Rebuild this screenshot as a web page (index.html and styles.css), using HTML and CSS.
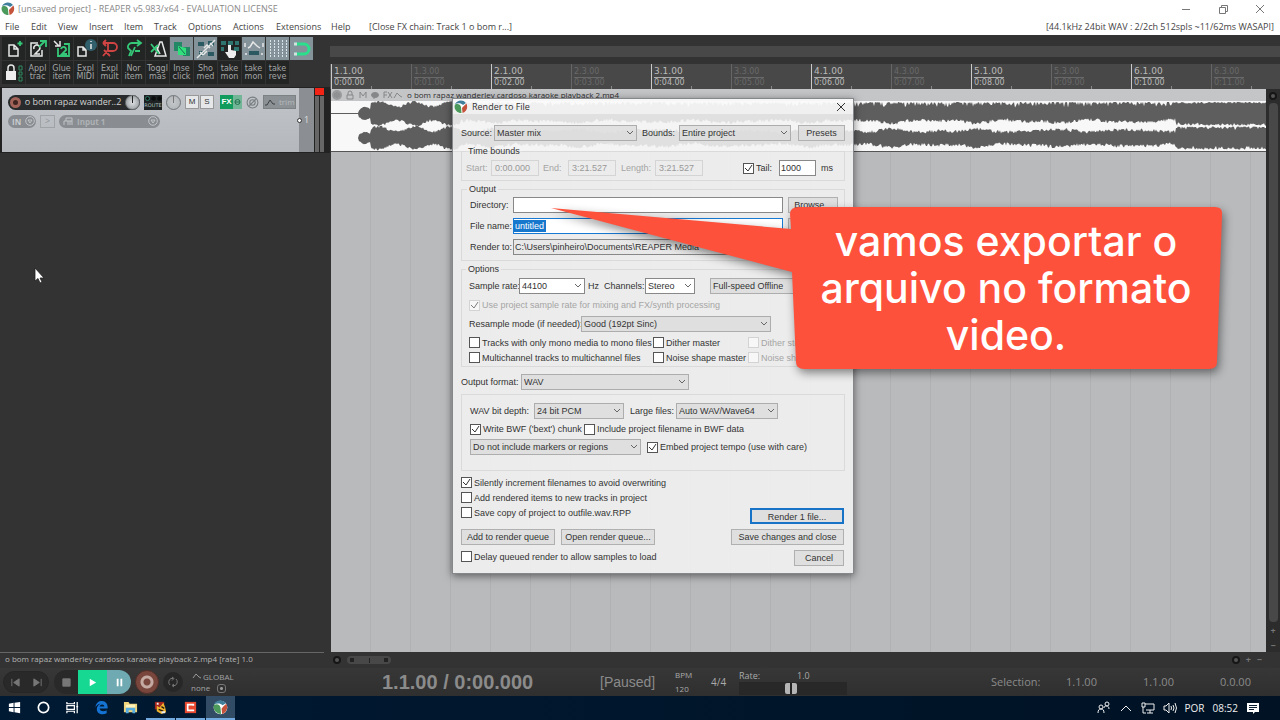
FILE: index.html
```html
<!DOCTYPE html>
<html lang="pt">
<head>
<meta charset="utf-8">
<title>REAPER - Render to File</title>
<link rel="stylesheet" href="styles.css">
</head>
<body>
<svg class="defs" aria-hidden="true">
  <symbol id="logo" viewBox="0 0 14 14">
    <circle cx="7" cy="7" r="6.4" fill="#fff"/>
    <path d="M1 4C3 0 9-1 12 3L9 5C7 3 4 3 1 4Z" fill="#3f7f9c"/>
    <path d="M1 4.500C4 3.500 6 4 7 7L7.500 13C2 13-.5 8 1 4.500Z" fill="#4b9a5c"/>
    <path d="M12.500 3.500C14.500 8 12 12 8.500 13L8 8C9 7 10.500 5 12.500 3.500Z" fill="#c5533c"/>
  </symbol>
</svg>

<header class="titlebar">
  <svg class="logo"><use href="#logo"/></svg>
  <span class="title">[unsaved project] - REAPER v5.983/x64 - EVALUATION LICENSE</span>
  <div class="winbtns">
    <button aria-label="Minimize"><svg viewBox="0 0 10 10"><path d="M1 5.500H9"/></svg></button>
    <button aria-label="Restore"><svg viewBox="0 0 10 10"><path d="M1.500 3.500H7.500V9.500H1.500ZM3.500 3V1.500H9.500V7.500H8"/></svg></button>
    <button aria-label="Close"><svg viewBox="0 0 10 10"><path d="M1 1L9 9M9 1L1 9"/></svg></button>
  </div>
</header>
<nav class="menubar">
  <div class="menus"><span>File</span><span>Edit</span><span>View</span><span>Insert</span><span>Item</span><span>Track</span><span>Options</span><span>Actions</span><span>Extensions</span><span>Help</span><span>[Close FX chain: Track 1 o bom r...]</span></div>
  <span>[44.1kHz 24bit WAV : 2/2ch 512spls ~11/62ms WASAPI]</span>
</nav>

<main class="workspace">
  <section class="left">
    <div class="toolbar">
      <button aria-label="New project"><svg viewBox="0 0 22 22"><path class="w" d="M6 7H11L15 11V18H6ZM11 7V11H15"/><path class="g" d="M17 3V8M14.500 5.500H19.500"/></svg></button>
      <button aria-label="Open project"><svg viewBox="0 0 22 22"><path class="w" d="M11 5H4V18H15V12"/><path class="w" d="M7 11A3 3 0 1 1 12 12L8 16H13"/><path class="g" d="M12 9L18 3M13 3H19V9"/></svg></button>
      <button aria-label="Save project"><svg viewBox="0 0 22 22"><path class="g" d="M7 10V18H18V6H13"/><path class="w" d="M3 3L8 8M9 3V8H4"/><path class="g" d="M10 11A2.500 2.500 0 1 1 15 12L11 16H16"/></svg></button>
      <button aria-label="Project settings"><svg viewBox="0 0 22 22"><path class="w" d="M3 9H8L11 12V18H3ZM8 9V12H11"/><circle cx="16" cy="7" r="6" fill="#315f6b"/><path class="w" d="M16 6V11M16 3V4"/></svg></button>
      <button aria-label="Undo"><svg viewBox="0 0 22 22"><path class="r" d="M4 5H14A4 4 0 0 1 14 13H9M9 5V12L4 18M5 12L11 18M4 5L7 2M4 5L7 8"/></svg></button>
      <button aria-label="Redo"><svg viewBox="0 0 22 22"><path class="g" d="M18 5H9A4 4 0 0 0 5 10L8 13L6 18M14 2L18 5L14 8M8 18L12 9M12 13H17"/></svg></button>
      <button aria-label="Metronome"><svg viewBox="0 0 22 22"><path class="w" d="M13 4L8 18H19L15 4ZM13 16L9 8"/><path class="g" d="M4 6L12 16M4 14L11 7"/></svg></button>
      <button class="on" aria-label="Crossfade"><svg viewBox="0 0 22 22"><path fill="#238765" d="M3 4H11V13H3ZM12 9H19V18H12Z"/><path fill="#2fe07c" d="M7 8L15 10V17H7Z"/><path stroke="#1d6e52" d="M8 9L14 16"/></svg></button>
      <button class="on" aria-label="Item grouping"><svg viewBox="0 0 22 22"><path fill="#2b5961" d="M3 4H9V8H3ZM13 3H19V8H13ZM4 13H9V18H4ZM13 14H19V18H13Z"/><path class="w" d="M2 20L20 2M5 14L8 17L12 13M9 10L12 7L15 10M15 5L18 8"/></svg></button>
      <button aria-label="Ripple editing"><svg viewBox="0 0 22 22"><path fill="#2f756f" d="M2 3H7V7H2ZM9 3H14V7H9ZM16 3H20V7H16ZM2 9H5V13H2ZM15 9H20V13H15Z"/><path fill="#eee" d="M9 7H12V12L17 13V17L15 20H10L6 14H9Z"/></svg></button>
      <button class="on" aria-label="Envelopes"><svg viewBox="0 0 22 22"><path class="w" d="M5 10L7 9L10 4L14 8L17 10M2 16H4M18 16H20"/><path fill="#2c5961" d="M6 13H16V17H6Z"/><path class="w" d="M2 5V9M20 5V9"/></svg></button>
      <button class="on" aria-label="Grid"><svg viewBox="0 0 22 22"><path class="grid" d="M3.500 2V20M7.500 2V20M11.500 2V20M15.500 2V20M19.500 2V20"/></svg></button>
      <button class="on" aria-label="Snap"><svg viewBox="0 0 22 22"><path class="snap" d="M3 6H13A5 5 0 0 1 13 16H3"/><path stroke="#d5dde0" stroke-width="3" d="M3 6H6M3 16H6"/></svg></button>
      <button aria-label="Lock"><svg viewBox="0 0 22 22"><path fill="#eee" d="M3 9H13V18H3Z"/><path class="w" d="M5 9V6A3 3 0 0 1 11 6V9"/><path class="lk" d="M16 4H19V8H16ZM16 10H19V13H16ZM16 15H19V19H16Z"/></svg></button>
      <button>Appl<br>trac</button><button>Glue<br>item</button><button>Expl<br>MIDI</button><button>Expl<br>mult</button><button>Nor<br>item</button><button>Toggl<br>mas</button><button>Inse<br>click</button><button>Sho<br>med</button><button>take<br>mon</button><button>take<br>mon</button><button>take<br>reve</button>
    </div>

    <div class="trackrow">
      <div class="track">
        <div class="tline">
          <div class="tname"><i class="arm"></i><span>o bom rapaz wander..2</span><i class="knob"></i></div>
          <button class="route"><i></i><b></b><b></b><span>ROUTE</span></button>
          <i class="knob pale"></i>
          <div class="ms"><button>M</button><button>S</button></div>
          <button class="fx"><b>FX</b><svg viewBox="0 0 9 12"><circle cx="4.500" cy="6" r="2.500"/><path d="M2 6H7"/></svg></button>
          <svg class="phase" viewBox="0 0 12 12"><circle cx="6" cy="6" r="5"/><circle cx="6" cy="6" r="2.500"/><path d="M3 9L9 3"/></svg>
          <button class="trim"><svg viewBox="0 0 12 10"><path d="M1 8H3L6 3L9 7H11"/></svg><span>trim</span></button>
        </div>
        <div class="tline second">
          <button class="in">IN <svg viewBox="0 0 10 10"><circle cx="5" cy="5" r="4.300"/><path d="M3 4H7L5 7Z"/></svg></button>
          <button class="arrow">&gt;</button>
          <button class="input"><svg viewBox="0 0 10 10"><path d="M1 9V5H3V2H9V9M3 5H9M5 5V9M7 5V9"/></svg><span>Input 1</span><svg viewBox="0 0 10 10"><circle cx="5" cy="5" r="4.300"/><path d="M3 4H7L5 7Z"/></svg></button>
        </div>
      </div>
      <div class="tnum"><i></i>1</div>
      <div class="meter"><i></i><i></i></div>
    </div>
    <div class="status">o bom rapaz wanderley cardoso karaoke playback 2.mp4 [rate] 1.0</div>
  </section>

  <section class="right">
    <div class="overview"></div>
    <div class="ruler" id="ruler"></div>
    <div class="arrange">
      <div class="canvas">
        <div class="item">
          <div class="itemhead">
            <svg viewBox="0 0 72 12"><circle cx="6" cy="6" r="5" fill="#989a9c" stroke="none"/><path d="M4 4V8M6 3V9M8 4V8"/><path d="M16 6H22V10H16ZM17 6V4A2 2 0 0 1 21 4V6"/><path d="M29 9V3L32 7L35 3V9"/><ellipse cx="44" cy="6" rx="3.500" ry="2.500" fill="#858789"/><path d="M43 8V10M53 9V3H56M53 6H56M57 3L61 9M61 3L57 9M63 9L66 4L69 7L71 8"/></svg>
            <span>o bom rapaz wanderley cardoso karaoke playback 2.mp4</span>
          </div>
          <svg class="wave" id="wave" viewBox="0 0 935 50" preserveAspectRatio="none"></svg>
        </div>
      </div>
      <div class="vscroll"><i class="dot"></i><div class="thumb"></div><span>+</span><span>−</span></div>
    </div>
    <div class="hscroll"><i class="dot"></i><div class="hthumb"><i></i><b></b><i></i></div><span class="grow"></span><i class="dot"></i><span>+</span><span>−</span></div>
  </section>
</main>

<footer class="transport">
  <div class="pill"><button aria-label="Go to start"><svg viewBox="0 0 12 12"><path d="M2 2V10M10 2V10L4 6Z"/></svg></button><button aria-label="Go to end"><svg viewBox="0 0 12 12"><path d="M10 2V10M2 2V10L8 6Z"/></svg></button></div>
  <div class="pill main"><button aria-label="Stop"><svg viewBox="0 0 12 12"><path d="M2 2H10V10H2Z"/></svg></button><button class="play" aria-label="Play"><svg viewBox="0 0 12 12"><path d="M3 2L10 6L3 10Z"/></svg></button><button class="pause" aria-label="Pause"><svg viewBox="0 0 12 12"><path d="M3 2H5V10H3ZM7 2H9V10H7Z"/></svg></button></div>
  <button class="rec" aria-label="Record"></button>
  <button class="loop" aria-label="Repeat"><svg viewBox="0 0 12 12"><path d="M3 9A4 4 0 0 1 4 2.500H6M9 3A4 4 0 0 1 8 9.500H6M5 1L7 2.500L5 4.500M7 8L5 9.500L7 11"/></svg></button>
  <div class="global"><span><svg viewBox="0 0 10 8"><path d="M1 6L4 2L7 5L9 6"/></svg>GLOBAL</span><span>none <i></i></span></div>
  <div class="time">1.1.00 / 0:00.000</div>
  <div class="paused">[Paused]</div>
  <div class="bpm"><span>BPM</span><span>120</span></div>
  <div class="sig">4/4</div>
  <div class="rate"><span>Rate:</span><span>1.0</span><input type="range" aria-label="Rate" value="48"></div>
  <div class="sel"><span>Selection:</span><span>1.1.00</span><span>1.1.00</span><span>0.0.00</span></div>
</footer>

<footer class="taskbar">
  <button aria-label="Start"><svg viewBox="0 0 16 16"><path fill="#fff" d="M2 4L7 3V7.500H2ZM8 3L14 2V7.500H8ZM2 8.500H7V13L2 12ZM8 8.500H14V14L8 13Z"/></svg></button>
  <button aria-label="Cortana"><svg viewBox="0 0 16 16"><circle cx="8" cy="8" r="5.500" fill="none" stroke="#fff" stroke-width="1.800"/></svg></button>
  <button aria-label="Task view"><svg viewBox="0 0 16 16"><path fill="none" stroke="#fff" stroke-width="1.300" d="M2 2V4H10V2M2 14V12H10V14M2 6H10V10H2ZM13 2V14M12 7H14"/></svg></button>
  <button aria-label="Edge"><svg viewBox="0 0 16 16"><path fill="#1573d4" d="M1.500 8C2 3 5 1 8.500 1C13 1 15 5 14.500 9H6C6.500 12.500 11 12.500 13.500 11V14C9 16.500 3 15 3 9.500C3 7 5 5 7 4C4.500 4 2.500 6 1.500 8ZM6 7H11C11 4 6.500 4 6 7Z"/></svg></button>
  <button aria-label="Explorer"><svg viewBox="0 0 16 16"><path fill="#f0d47c" d="M1 2H6L7 4H15V13H1Z"/><path fill="#58aee0" d="M3 8H13V14H10V11H6V14H3Z"/><path fill="#fff3bd" d="M3 5H13V8H3Z"/></svg></button>
  <button class="open" aria-label="Player"><svg viewBox="0 0 16 16"><path fill="#a32620" d="M2 2H12V10H2Z"/><path fill="#f0b52e" d="M4 6L7 8L11 3L13 8L14 13L9 15L4 12Z"/><path stroke="#2a1a12" stroke-width="1.500" d="M6 10L11 12M9 7L12 9"/><path fill="#eee" d="M4 3H6V5H4ZM9 12H13V14H9Z"/></svg></button>
  <button class="open" aria-label="Camtasia"><svg viewBox="0 0 16 16"><path fill="#e8482f" d="M2 2H14V14H2Z"/><path fill="none" stroke="#fff" stroke-width="1.800" d="M11 6V5H5V11H11V10"/></svg></button>
  <button class="open active" aria-label="REAPER"><svg viewBox="0 0 14 14"><use href="#logo"/></svg></button>
  <div class="tray">
    <svg viewBox="0 0 14 14"><path d="M1 12C1 9 2 8 4 8C6 8 7 9 7 12M7 7C7 5 8 5 9.500 5C11 5 12 6 12 8"/><circle cx="4" cy="6" r="2"/><circle cx="10" cy="3" r="2"/></svg>
    <svg viewBox="0 0 14 14"><path d="M2 10L7 5L12 10"/></svg>
    <svg viewBox="0 0 14 14"><path d="M4 3H13V9H5M9 9V12M6 12H12M1 2H4V6H1ZM2 6V12H5"/></svg>
    <svg viewBox="0 0 14 14"><path d="M1 5H3L6 2V12L3 9H1ZM8 5Q9 7 8 9M10 4Q12 7 10 10M12 2Q15 7 12 12"/></svg>
    <span>POR</span><span>08:52</span>
    <svg viewBox="0 0 14 14"><path fill="#fff" stroke="none" d="M1 2H13V11H9L7 13V11H1Z"/><path stroke="#0a1d31" d="M3 4.500H11M3 6.500H11M3 8.500H8"/></svg>
  </div>
</footer>

<form class="dialog" onsubmit="return false">
  <div class="dtitle"><svg class="logo"><use href="#logo"/></svg><span>Render to File</span><button aria-label="Close dialog"><svg viewBox="0 0 10 10"><path d="M1 1L9 9M9 1L1 9"/></svg></button></div>
  <div class="dbody">
    <div class="row source">
      <label class="l-src" for="src">Source:</label><select id="src" class="w143"><option>Master mix</option></select>
      <label class="l-bnd" for="bnd">Bounds:</label><select id="bnd" class="w112"><option>Entire project</option></select>
      <button class="presets">Presets</button>
    </div>
    <fieldset class="tb">
      <legend>Time bounds</legend>
      <div class="row">
        <label class="dis l-start" for="st">Start:</label><input class="ro" id="st" disabled value="0:00.000">
        <label class="dis l-end" for="en">End:</label><input class="ro" id="en" disabled value="3:21.527">
        <label class="dis l-len" for="ln">Length:</label><input class="ro" id="ln" disabled value="3:21.527">
        <label class="ck tail"><input type="checkbox" checked>Tail:</label><input class="w37" aria-label="Tail length" value="1000"><span class="ms-unit">ms</span>
      </div>
    </fieldset>
    <fieldset class="out">
      <legend>Output</legend>
      <div class="row"><label class="l-out" for="dir">Directory:</label><input id="dir" class="grow"><button class="w50">Browse...</button></div>
      <div class="row"><label class="l-out" for="fn">File name:</label><div class="fname grow"><input id="fn" value="untitled"></div><button class="w50" aria-label="Wildcards"></button></div>
      <div class="row"><label class="l-out" for="rt">Render to:</label><input id="rt" class="grow path" readonly value="C:\Users\pinheiro\Documents\REAPER Media"><button class="w50" aria-label="File list"></button></div>
    </fieldset>
    <fieldset class="opt">
      <legend>Options</legend>
      <div class="row"><label class="l-sr" for="sr">Sample rate:</label><select id="sr" class="white w66"><option>44100</option></select><span class="hz">Hz</span><label class="l-ch" for="ch">Channels:</label><select id="ch" class="white w50"><option>Stereo</option></select><select class="speed" aria-label="Render speed"><option>Full-speed Offline</option></select></div>
      <div class="row"><label class="ck dis"><input type="checkbox" checked disabled>Use project sample rate for mixing and FX/synth processing</label></div>
      <div class="row"><label class="l-rm" for="rm">Resample mode (if needed):</label><select id="rm" class="w190"><option>Good (192pt Sinc)</option></select></div>
      <div class="checks">
        <label class="ck"><input type="checkbox">Tracks with only mono media to mono files</label><label class="ck"><input type="checkbox">Dither master</label><label class="ck dis"><input type="checkbox" disabled>Dither stems</label>
        <label class="ck"><input type="checkbox">Multichannel tracks to multichannel files</label><label class="ck"><input type="checkbox">Noise shape master</label><label class="ck dis"><input type="checkbox" disabled>Noise shape stems</label>
      </div>
    </fieldset>
    <div class="row format"><label class="l-of" for="of">Output format:</label><select id="of" class="w168"><option>WAV</option></select></div>
    <div class="box">
      <div class="row"><label class="l-bd" for="bd">WAV bit depth:</label><select id="bd" class="w90"><option>24 bit PCM</option></select><label class="l-lf" for="lf">Large files:</label><select id="lf" class="w102"><option>Auto WAV/Wave64</option></select></div>
      <div class="row"><label class="ck c1"><input type="checkbox" checked>Write BWF ('bext') chunk</label><label class="ck"><input type="checkbox">Include project filename in BWF data</label></div>
      <div class="row"><select class="w171" aria-label="Markers"><option>Do not include markers or regions</option></select><label class="ck emb"><input type="checkbox" checked>Embed project tempo (use with care)</label></div>
    </div>
    <div class="foot">
      <div class="fl">
        <label class="ck"><input type="checkbox" checked>Silently increment filenames to avoid overwriting</label>
        <label class="ck"><input type="checkbox">Add rendered items to new tracks in project</label>
        <label class="ck"><input type="checkbox">Save copy of project to outfile.wav.RPP</label>
        <div class="row qb"><button>Add to render queue</button><button>Open render queue...</button></div>
        <label class="ck"><input type="checkbox">Delay queued render to allow samples to load</label>
      </div>
      <div class="fr"><button class="primary">Render 1 file...</button><button class="save">Save changes and close</button><button class="cancel">Cancel</button></div>
    </div>
  </div>
</form>

<aside class="callout">
  <svg viewBox="0 0 680 172"><path d="M249 2H665Q673 2 672 10L667 157Q667 164 659 164H254Q246 164 246 157L242 67L1 3L241 24L240 9Q240 2 249 2Z"/></svg>
  <p>vamos exportar o<br>arquivo no formato<br>video.</p>
</aside>
<svg class="cursor" viewBox="0 0 12 18"><path d="M1 1V14L4 11.500L6 16L8 15L6 11H10Z" fill="#fff" stroke="#222" stroke-width=".8"/></svg>
<script src="script.js"></script>
</body>
</html>
```
FILE: styles.css
```css
* { box-sizing: border-box; }
body { margin: 0; height: 100vh; overflow: hidden; display: flex; flex-direction: column; background: #333; color: #aaa; font: 9px/12px "Open Sans", "Noto Sans", sans-serif; position: relative; }
button { font: inherit; color: inherit; padding: 0; border: 0; background: none; }
i { font-style: normal; flex: none; }
svg { flex: none; fill: none; }
.defs { position: absolute; width: 0; height: 0; }
.grow { flex: 1; min-width: 0; }
.logo { width: 14px; height: 14px; }

.titlebar { height: 18px; flex: none; display: flex; align-items: center; gap: 3px; padding: 0 15px 0 1px; background: #fff; color: #888; }
.title { flex: 1; }
.winbtns { display: flex; gap: 27px; }
.winbtns button { width: 10px; height: 10px; display: flex; }
.winbtns svg { width: 10px; height: 10px; stroke: #777; }
.menubar { height: 17px; flex: none; display: flex; justify-content: space-between; align-items: center; padding: 0 6px 0 5px; background: #fff; color: #444; white-space: nowrap; }
.menus { display: grid; grid-template-columns: 26px 27px 31px 35px 30px 34px 45px 43px 55px 38px auto; }

.workspace { flex: 1; min-height: 0; display: flex; }
.left { width: 330px; flex: none; display: flex; flex-direction: column; }
.toolbar { display: grid; grid-template-columns: repeat(13, 23px); grid-auto-rows: 23px; gap: 1px; padding: 2px 2px 3px; }
.toolbar button { background: #232424; color: #a4a6a6; font: 8px/8px "DejaVu Sans", sans-serif; display: flex; align-items: center; justify-content: center; overflow: hidden; }
.toolbar button.on { background: #84929a; }
.toolbar svg { width: 22px; height: 22px; }
.toolbar .w { stroke: #e6e8e8; stroke-width: 1.5; }
.toolbar .g { stroke: #35c878; stroke-width: 1.8; }
.toolbar .r { stroke: #d14444; stroke-width: 1.8; }
.toolbar .lk { stroke: #2f8a60; stroke-width: 1; }
.toolbar .grid { stroke: #dbe4e8; stroke-dasharray: 2 1; }
.toolbar .snap { stroke: #2ae08c; stroke-width: 3; }

.trackrow { height: 66px; flex: none; display: flex; padding: 1px 6px 1px 2px; background: #222; }
.track { flex: 1; background: linear-gradient(#c2c6cb, #b4b8bd); padding: 6px 0 0 6px; }
.tline { display: flex; align-items: center; height: 16px; gap: 4px; }
.tname { width: 132px; height: 15px; border-radius: 8px; background: #292a2b; color: #d2d2d2; display: flex; align-items: center; justify-content: space-between; padding-left: 2px; white-space: nowrap; font: 9px/14px "Open Sans", sans-serif; }
.arm { width: 11px; height: 11px; border-radius: 50%; border: 3px solid #a26358; background: #402420; }
.knob { width: 15px; height: 15px; border-radius: 50%; background: linear-gradient(90deg, transparent 6px, #222 6px, #222 7px, transparent 7px) 0 0/13px 7px no-repeat, radial-gradient(#dfe1e3, #8c9093); border: 1px solid #70767a; }
.knob.pale { background: linear-gradient(90deg, transparent 6px, #777 6px, #777 7px, transparent 7px) 0 0/13px 7px no-repeat, radial-gradient(#c5c8cb, #aeb2b5); }
.route { width: 18px; height: 15px; background: #1e2223; color: #a9c0bd; display: flex; flex-wrap: wrap; justify-content: center; gap: 0 1px; padding-top: 1px; font: 5px/6px "DejaVu Sans", sans-serif; }
.route i, .route b { width: 5px; height: 5px; border-radius: 50%; background: #0b0d0d; border: 1px solid #101414; }
.route i { border-color: #2a7764; }
.ms { display: flex; gap: 1px; margin: 0 2px 0 0; }
.ms button { width: 14px; height: 14px; background: #e5e7e9; color: #333; border: 1px solid #999; font: 8px/12px "Liberation Sans", sans-serif; }
.fx { width: 22px; height: 14px; display: flex; background: #72b597; color: #fff; font: 8px/14px "Liberation Sans", sans-serif; }
.fx b { width: 13px; background: #119b5c; }
.fx svg { width: 9px; height: 14px; stroke: #25734f; }
.phase { width: 13px; height: 13px; stroke: #777d80; }
.trim { width: 33px; height: 14px; display: flex; align-items: center; gap: 3px; background: #8c9195; color: #b7bbbe; font-size: 8px; border: 1px solid #7c8184; }
.trim svg { width: 12px; height: 10px; stroke: #3a4043; }
.tline.second { margin-top: 3px; color: #c7cbce; }
.in, .input { height: 13px; border-radius: 7px; background: #898d91; display: flex; align-items: center; gap: 4px; padding: 0 2px 0 4px; font: bold 8px/13px "Open Sans", sans-serif; }
.in { width: 28px; }
.in svg, .input svg { width: 10px; height: 10px; stroke: #c1c5c8; }
.arrow { width: 15px; height: 13px; border: 1px solid #9fa3a6; color: #8e9295; line-height: 10px; }
.input { width: 101px; }
.input span { flex: 1; text-align: left; color: #aeb2b5; }
.tnum { width: 15px; background: #8b8f93; color: #ddd; display: flex; align-items: center; gap: 2px; }
.tnum i { width: 5px; height: 5px; margin-left: -2px; border-radius: 50%; background: #fff; border: 1px solid #333; }
.meter { width: 9px; display: grid; grid-template-columns: 4px 4px; gap: 1px; background: linear-gradient(#f32416 7px, transparent 7px); margin-left: 1px; }
.meter i { background: linear-gradient(transparent 8px, #666 8px); }
.status { margin-top: auto; margin-right: 6px; height: 16px; border-top: 1px solid #666; padding: 0 5px; color: #b5b5b5; font-size: 8px; }

.right { flex: 1; min-width: 0; display: flex; flex-direction: column; }
.overview { height: 29px; flex: none; border: solid #333; border-width: 11px 0 7px; background: #484848; }
.ruler { height: 25px; flex: none; display: flex; overflow: hidden; background: #484848; border-left: 1px solid #555; }
.mark { width: 80px; flex: none; border-left: 1px solid #c9c9c9; padding: 2px 0 0 2px; color: #b9b9b9; font: 9px/11px "DejaVu Sans", sans-serif; background: linear-gradient(#888, #888) 39px 22px/1px 3px no-repeat; }
.mark span { display: block; width: 30px; white-space: nowrap; }
.mark span + span { border-top: 1px solid #aaa; font-size: 8px; line-height: 10px; }
.mark.minor { color: #686868; border-left-color: #666; font-size: 8px; }
.mark.minor span + span { border-color: #686868; }
.arrange { flex: 1; min-height: 0; display: flex; border-left: 1px solid #333; }
.canvas { flex: 1; min-width: 0; background: repeating-linear-gradient(90deg, transparent 0 39px, #afb1b3 39px 40px), #b9babc; }
.item { border-bottom: 1px solid #555; }
.itemhead { height: 12px; background: #c4c5c7; color: #2f2f2f; display: flex; align-items: center; gap: 4px; font-size: 8px; white-space: nowrap; }
.itemhead svg { width: 72px; height: 12px; stroke: #858789; }
.wave { display: block; width: 100%; height: 50px; background: #f8f8f8; }
.vscroll { width: 14px; background: #2c2c2c; display: flex; flex-direction: column; align-items: center; gap: 3px; padding-top: 3px; color: #777; font-weight: bold; }
.dot { width: 8px; height: 8px; border-radius: 50%; border: 2px solid #161616; background: #555; }
.thumb { flex: 1; width: 9px; border-radius: 4px; background: #484848; }
.hscroll { height: 16px; flex: none; display: flex; align-items: center; gap: 6px; padding: 0 18px 0 3px; color: #777; font-weight: bold; }
.hthumb { width: 44px; height: 8px; border-radius: 4px; background: #484848; display: flex; align-items: center; justify-content: space-between; padding: 0 3px; }
.hthumb i { width: 4px; height: 4px; background: #222; }
.hthumb b { width: 1px; height: 5px; background: #222; }

.transport { height: 28px; flex: none; display: flex; align-items: center; padding: 0 28px 0 3px; background: linear-gradient(#373737, #2f2f2f); white-space: nowrap; }
.pill { height: 22px; flex: none; display: flex; border-radius: 11px; background: #292929; overflow: hidden; border: 1px solid #262626; }
.pill button { width: 22px; display: flex; align-items: center; justify-content: center; }
.pill svg { width: 11px; height: 11px; fill: #777; stroke: #777; }
.pill.main { margin-left: 5px; height: 24px; border: 0; border-radius: 12px; }
.pill.main button { width: 24px; }
.pill.main .play { width: 29px; background: #16d892; }
.pill.main .pause { background: #6fa9b1; }
.pill .play svg, .pill .pause svg { fill: #fff; stroke: none; }
.rec { width: 24px; height: 24px; margin-left: 4px; border-radius: 50%; background: radial-gradient(transparent 3px, #c4aaa2 4px, #c4aaa2 6px, transparent 7px), #78463c; border: 1px solid #502e28; flex: none; }
.loop { width: 20px; height: 20px; margin: 0 8px 0 4px; border-radius: 50%; background: #272727; padding: 4px; display: flex; flex: none; }
.loop svg { width: 12px; height: 12px; stroke: #777; }
.global { width: 191px; display: flex; flex-direction: column; color: #a2a2a2; font-size: 8px; line-height: 11px; }
.global svg { width: 12px; height: 8px; stroke: #999; }
.global i { display: inline-block; width: 9px; height: 9px; border: 1px solid #777; border-radius: 3px; margin-left: 5px; vertical-align: middle; background: radial-gradient(#999 1px, transparent 2px); }
.time { width: 218px; color: #8b8b8b; font: bold 20px/24px "Liberation Sans", sans-serif; }
.paused { width: 75px; color: #8b8b8b; font: 14px/20px "Liberation Sans", sans-serif; }
.bpm { width: 36px; display: flex; flex-direction: column; gap: 2px; font-size: 8px; }
.sig { width: 28px; font-size: 10px; }
.rate { width: 112px; display: grid; grid-template-columns: 1fr 54px; line-height: 12px; }
.rate input { grid-column: 1 / 3; appearance: none; margin: 0; width: 108px; height: 13px; background: #282828; }
.rate input::-webkit-slider-thumb { appearance: none; width: 12px; height: 11px; border-radius: 2px; background: linear-gradient(90deg, #b5b5b5 5px, #222 5px, #222 7px, #b5b5b5 7px); }
.sel { margin-left: auto; display: grid; grid-template-columns: 75px 77px 77px 32px; font-size: 11px; color: #8b8b8b; }

.taskbar { height: 24px; flex: none; display: flex; background: linear-gradient(90deg, #001a33, #001224); color: #eee; }
.taskbar button { width: 29px; display: flex; align-items: center; justify-content: center; border-bottom: 2px solid transparent; }
.taskbar button svg { width: 15px; height: 15px; }
.taskbar .open { border-color: #72a9df; margin-left: 1px; }
.taskbar .active { background: #334c66; }
.tray { margin-left: auto; display: flex; align-items: center; gap: 8px; padding-right: 20px; font-size: 10px; }
.tray svg { width: 14px; height: 14px; stroke: #eee; }

.dialog { position: absolute; left: 452px; top: 98px; width: 402px; margin: 0; border: 1px solid #85888a; background: rgba(242, 242, 242, .88); box-shadow: 0 2px 8px rgba(0, 0, 0, .5); color: #333; font: 9px/14px "Liberation Sans", Arial, sans-serif; white-space: nowrap; }
.dtitle { height: 15px; display: flex; align-items: center; gap: 4px; padding: 0 7px 0 1px; background: rgba(255, 255, 255, .5); font: 9px/14px "Open Sans", sans-serif; }
.dtitle span { flex: 1; }
.dtitle button { width: 10px; height: 10px; display: flex; }
.dtitle button svg { width: 10px; height: 10px; stroke: #333; }
.dbody { padding: 0 8px 7px; }
.row { display: flex; align-items: center; height: 16px; }
.row > * { flex: none; }
.row > .grow { flex: 1; }
.source { margin: 11px 0 2px; }
.dialog select, .dialog button, .dialog input { font: inherit; }
.dialog select { appearance: none; height: 16px; margin: 0; padding: 0 12px 0 2px; border: 1px solid #adadad; border-radius: 0; color: #333; background: url("data:image/svg+xml,%3Csvg xmlns='http://www.w3.org/2000/svg' width='8' height='6'%3E%3Cpath d='M1 1L4 4L7 1' fill='none' stroke='%23666'/%3E%3C/svg%3E") right 2px center no-repeat rgba(220, 220, 220, .8); }
.dialog select.white { background-color: #fff; border-color: #888; }
.dialog .row > button, .fr button { height: 16px; border: 1px solid #b0b0b0; background: rgba(222, 222, 222, .9); }
.dialog input:not([type]) { height: 16px; margin: 0; padding: 0 1px; border: 1px solid #888; border-radius: 0; background: #fff; color: #333; min-width: 0; }
.dialog input.ro:not([type]) { width: 48px; padding: 0 3px; border-color: #d4d4d4; background: transparent; color: #999; }
.dialog .dis { color: #a5a5a5; }
fieldset { margin: 0; padding: 0 5px; border: 1px solid #dadada; min-width: 0; }
legend { height: 16px; line-height: 16px; padding: 0 2px; }
.l-src { width: 33px; }
.l-bnd { width: 42px; padding-left: 5px; }
.w143 { width: 143px; }
.w112 { width: 112px; }
.presets { width: 47px; margin-left: auto; }
.tb { padding: 1px 5px 4px 4px; }
.l-start { width: 25px; }
.l-end { width: 29px; padding-left: 4px; }
.l-len { width: 39px; padding-left: 5px; }
.tail { width: 36px; margin-left: auto; }
.w37 { width: 37px; }
.ms-unit { width: 23px; padding-left: 5px; }
.out { padding-bottom: 5px; }
.out .row + .row { margin-top: 5px; }
.out .row { padding-left: 3px; padding-right: 1px; }
.l-out { width: 43px; }
.w50 { width: 50px; }
.out .w50 { margin-left: 5px; }
.fname { height: 16px; border: 1px solid #1779d3; background: #fff; display: flex; align-items: center; }
.fname input:not([type]) { width: 32px; height: 12px; border: 0; background: #1677cc; color: #fff; line-height: 12px; }
.dialog input.path:not([type]) { background: #e8e8e8; }
.opt { padding: 1px 5px 1px 4px; }
.opt .row { margin-bottom: 3px; padding-left: 3px; }
.l-sr { width: 50px; }
.w66 { width: 66px; }
.hz { width: 19px; padding-left: 3px; }
.l-ch { width: 41px; }
.dialog .speed { width: 120px; margin-left: 15px; }
.l-rm { width: 112px; }
.w190 { width: 190px; }
.ck { display: flex; align-items: center; height: 15px; gap: 2px; }
.ck input { appearance: none; width: 11px; height: 11px; margin: 0; border: 1px solid #555; background: #fff; flex: none; }
.ck input:checked { background: url("data:image/svg+xml,%3Csvg xmlns='http://www.w3.org/2000/svg' width='9' height='9'%3E%3Cpath d='M1 4L4 7L8 1' fill='none' stroke='%23333'/%3E%3C/svg%3E") center no-repeat #fff; }
.ck input:disabled { border-color: #c4c4c4; opacity: .6; }
.checks { display: grid; grid-template-columns: 184px 95px auto; padding-left: 3px; }
.format { margin: 7px 0 4px; }
.l-of { width: 60px; }
.w168 { width: 168px; }
.box { border: 1px solid #dadada; padding: 8px 8px 15px; display: grid; gap: 2px; }
.l-bd { width: 64px; }
.w90 { width: 90px; }
.l-lf { width: 52px; padding-left: 6px; }
.w102 { width: 102px; }
.c1 { width: 114px; }
.w171 { width: 171px; }
.emb { margin-left: 6px; }
.foot { display: flex; justify-content: space-between; margin-top: 4px; }
.qb { margin: 9px 0 4px; gap: 6px; }
.qb button { width: 94px; }
.fr { display: flex; flex-direction: column; align-items: flex-end; gap: 5px; padding: 33px 1px 0 0; }
.fr .primary { width: 94px; border: 2px solid #1673c7; }
.save { width: 113px; }
.cancel { width: 50px; }

.callout { position: absolute; left: 550px; top: 205px; width: 680px; height: 172px; }
.callout svg { position: absolute; inset: 0; width: 680px; height: 172px; filter: drop-shadow(2px 4px 5px rgba(0, 0, 0, .45)); }
.callout path { fill: #fe513c; }
.callout p { position: relative; margin: 0; padding: 13px 12px 0 244px; text-align: center; color: #fff; font: 500 41px/47px Inter, "Open Sans", sans-serif; white-space: nowrap; }
.cursor { position: absolute; left: 34px; top: 267px; width: 12px; height: 18px; }
```
FILE: script.js
```js
// Ruler: one cell per half measure, majors on every second cell.
const ruler = document.getElementById("ruler");
for (let i = 0; i < 12; i++) {
  const mark = document.createElement("div");
  mark.className = i % 2 ? "mark minor" : "mark";
  const measure = Math.floor(i / 2) + 1;
  const beat = document.createElement("span");
  const time = document.createElement("span");
  beat.textContent = measure + (i % 2 ? ".3.00" : ".1.00");
  time.textContent = "0:" + String(i).padStart(2, "0") + ".00";
  mark.append(beat, time);
  ruler.append(mark);
}

// Stereo waveform: separate upper and lower envelopes for each channel.
let seed = 7;
const noise = () => (seed = (seed * 16807) % 2147483647) / 2147483647;
const wobble = (x) => Math.abs(Math.sin(x / 25.5)) * 2.4 + Math.sin(x / 7) * 0.6;
function level(x, inner) {
  if (x < 28) return 0.4;
  if (x < 40) return 3 + 3 * Math.sin((x - 28) / 12 * Math.PI) + noise();
  if (x < 130) return 8 + 2.6 * Math.cos((x - 48) / 36 * 2 * Math.PI) + noise() * 2.6;
  if (x < 845) return inner ? 11 - wobble(x) - noise() * 3.4 : 11.6 - noise() * noise() * 6;
  return inner ? 12 - noise() * noise() * 4 : 11.8 - noise() * 2;
}
let shape = "";
for (const center of [12.5, 37.5]) {
  let top = "", bottom = "";
  const lower = center > 20;
  for (let x = 0; x <= 935; x++) {
    top += "L" + x + " " + (center - level(x, lower)).toFixed(1);
    bottom = "L" + x + " " + (center + level(x, true) - (lower ? 1 : 0)).toFixed(1) + bottom;
  }
  shape += "M0 " + center + top + bottom + "Z";
}
const path = document.createElementNS("http://www.w3.org/2000/svg", "path");
path.setAttribute("d", shape);
path.setAttribute("fill", "#5e5e5e");
document.getElementById("wave").append(path);
```
